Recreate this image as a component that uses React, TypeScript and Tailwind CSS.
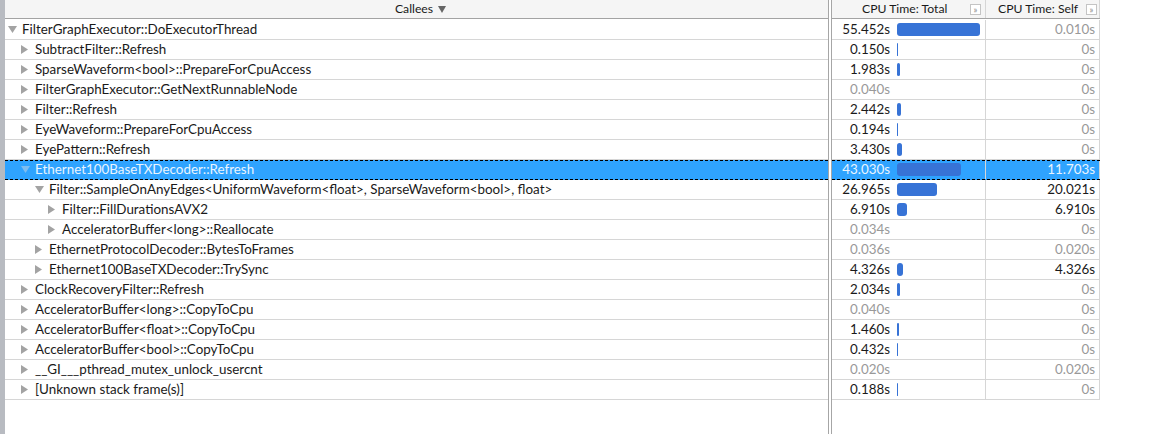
import React from "react";

type Row = {
  level: number;
  open: boolean;
  name: string;
  total: number;
  self: number;
  selected?: boolean;
};

const rows: Row[] = [
  { level: 0, open: true, name: "FilterGraphExecutor::DoExecutorThread", total: 55.452, self: 0.01 },
  { level: 1, open: false, name: "SubtractFilter::Refresh", total: 0.15, self: 0 },
  { level: 1, open: false, name: "SparseWaveform<bool>::PrepareForCpuAccess", total: 1.983, self: 0 },
  { level: 1, open: false, name: "FilterGraphExecutor::GetNextRunnableNode", total: 0.04, self: 0 },
  { level: 1, open: false, name: "Filter::Refresh", total: 2.442, self: 0 },
  { level: 1, open: false, name: "EyeWaveform::PrepareForCpuAccess", total: 0.194, self: 0 },
  { level: 1, open: false, name: "EyePattern::Refresh", total: 3.43, self: 0 },
  { level: 1, open: true, name: "Ethernet100BaseTXDecoder::Refresh", total: 43.03, self: 11.703, selected: true },
  { level: 2, open: true, name: "Filter::SampleOnAnyEdges<UniformWaveform<float>, SparseWaveform<bool>, float>", total: 26.965, self: 20.021 },
  { level: 3, open: false, name: "Filter::FillDurationsAVX2", total: 6.91, self: 6.91 },
  { level: 3, open: false, name: "AcceleratorBuffer<long>::Reallocate", total: 0.034, self: 0 },
  { level: 2, open: false, name: "EthernetProtocolDecoder::BytesToFrames", total: 0.036, self: 0.02 },
  { level: 2, open: false, name: "Ethernet100BaseTXDecoder::TrySync", total: 4.326, self: 4.326 },
  { level: 1, open: false, name: "ClockRecoveryFilter::Refresh", total: 2.034, self: 0 },
  { level: 1, open: false, name: "AcceleratorBuffer<long>::CopyToCpu", total: 0.04, self: 0 },
  { level: 1, open: false, name: "AcceleratorBuffer<float>::CopyToCpu", total: 1.46, self: 0 },
  { level: 1, open: false, name: "AcceleratorBuffer<bool>::CopyToCpu", total: 0.432, self: 0 },
  { level: 1, open: false, name: "__GI___pthread_mutex_unlock_usercnt", total: 0.02, self: 0.02 },
  { level: 1, open: false, name: "[Unknown stack frame(s)]", total: 0.188, self: 0 },
];

const indent = ["pl-[3px]", "pl-[16px]", "pl-[30px]", "pl-[43px]"];

const fmt = (v: number) => (v === 0 ? "0s" : v.toFixed(3) + "s");
// tiny values are greyed out and get no bar
const faint = (v: number) => v < 0.1;

function Arrow({ open, selected }: { open: boolean; selected?: boolean }) {
  const fill = selected ? "#7fbdf0" : "#a3a3a3";
  return (
    <span className="w-[14px] shrink-0 flex items-center">
      {open ? (
        <svg width="9" height="7" viewBox="0 0 9 7">
          <polygon points="0,0 9,0 4.5,7" fill={fill} />
        </svg>
      ) : (
        <svg width="7" height="9" viewBox="0 0 7 9">
          <polygon points="0,0 7,4.5 0,9" fill={fill} />
        </svg>
      )}
    </span>
  );
}

function ExpandBtn({ className }: { className: string }) {
  return (
    <span
      className={`w-[11px] h-[11px] shrink-0 border border-[#c4c4c4] bg-white flex items-center justify-center text-[9px] leading-none text-[#888] ${className}`}
    >
      »
    </span>
  );
}

const rowBase = "h-[20px] border-b flex items-center relative";
const selRow =
  "bg-[#2fa3ff] border-dashed border-black before:content-[''] before:absolute before:inset-x-0 before:top-0 before:border-t before:border-dashed before:border-black";

export default function App() {
  return (
    <div className="w-[1162px] h-[434px] bg-white flex overflow-hidden text-[13.4px] text-[#1a1a1a] font-['Lato','Liberation_Sans',sans-serif]">
      <div className="w-[5px] h-full bg-[#b8bbc1]" />

      {/* Callees tree */}
      <div className="w-[824px] h-full border-r border-[#a6a6a6]">
        <div className="h-[19px] bg-[#f5f5f5] border-b border-[#a3a3a3] flex items-center justify-center gap-[5px] text-[12.2px] pl-[8px]">
          <span>Callees</span>
          <svg width="8" height="7" viewBox="0 0 8 7">
            <polygon points="0,0 8,0 4,7" fill="#666" />
          </svg>
        </div>
        <div className="pt-[1px]">
          {rows.map((r, i) => (
            <div
              key={i}
              className={`${rowBase} ${indent[r.level]} ${r.selected ? selRow + " text-[#eaf5ff]" : "border-[#d6d6d6]"}`}
            >
              <Arrow open={r.open} selected={r.selected} />
              <span className="whitespace-nowrap">{r.name}</span>
            </div>
          ))}
        </div>
      </div>

      <div className="w-[2px] h-full" />

      {/* metrics */}
      <div className="flex-1 h-full border-l border-[#a6a6a6]">
        <div className="w-[268px]">
          <div className="h-[19px] bg-[#f5f5f5] border-b border-[#a3a3a3] flex text-[12.2px]">
            <div className="w-[154px] border-r border-[#d6d6d6] flex items-center">
              <span className="ml-[30px] whitespace-nowrap">CPU Time: Total</span>
              <ExpandBtn className="ml-auto mr-[4px]" />
            </div>
            <div className="w-[114px] border-r border-[#d6d6d6] flex items-center">
              <span className="ml-[12px] whitespace-nowrap">CPU Time: Self</span>
              <ExpandBtn className="ml-auto mr-[2px]" />
            </div>
          </div>
          <div className="pt-[1px]">
            {rows.map((r, i) => (
              <div
                key={i}
                className={`${rowBase} ${r.selected ? selRow + " text-[#eaf5ff]" : "border-[#d6d6d6]"}`}
              >
                <div className="w-[154px] h-full border-r border-[#d6d6d6] flex items-center">
                  <span
                    className={`w-[58px] text-right ${faint(r.total) && !r.selected ? "text-[#999]" : ""}`}
                  >
                    {fmt(r.total)}
                  </span>
                  {!faint(r.total) && (
                    <span
                      className="ml-[7px] h-[13px] rounded-[3px] bg-[#3773d6]"
                      style={{ width: Math.max(1, Math.round(r.total * 1.497)) }}
                    />
                  )}
                </div>
                <div
                  className={`w-[114px] h-full border-r border-[#d6d6d6] flex items-center justify-end pr-[4px] ${
                    r.selected ? "" : faint(r.self) ? "text-[#999]" : ""
                  }`}
                >
                  {fmt(r.self)}
                </div>
              </div>
            ))}
          </div>
        </div>
      </div>
    </div>
  );
}
